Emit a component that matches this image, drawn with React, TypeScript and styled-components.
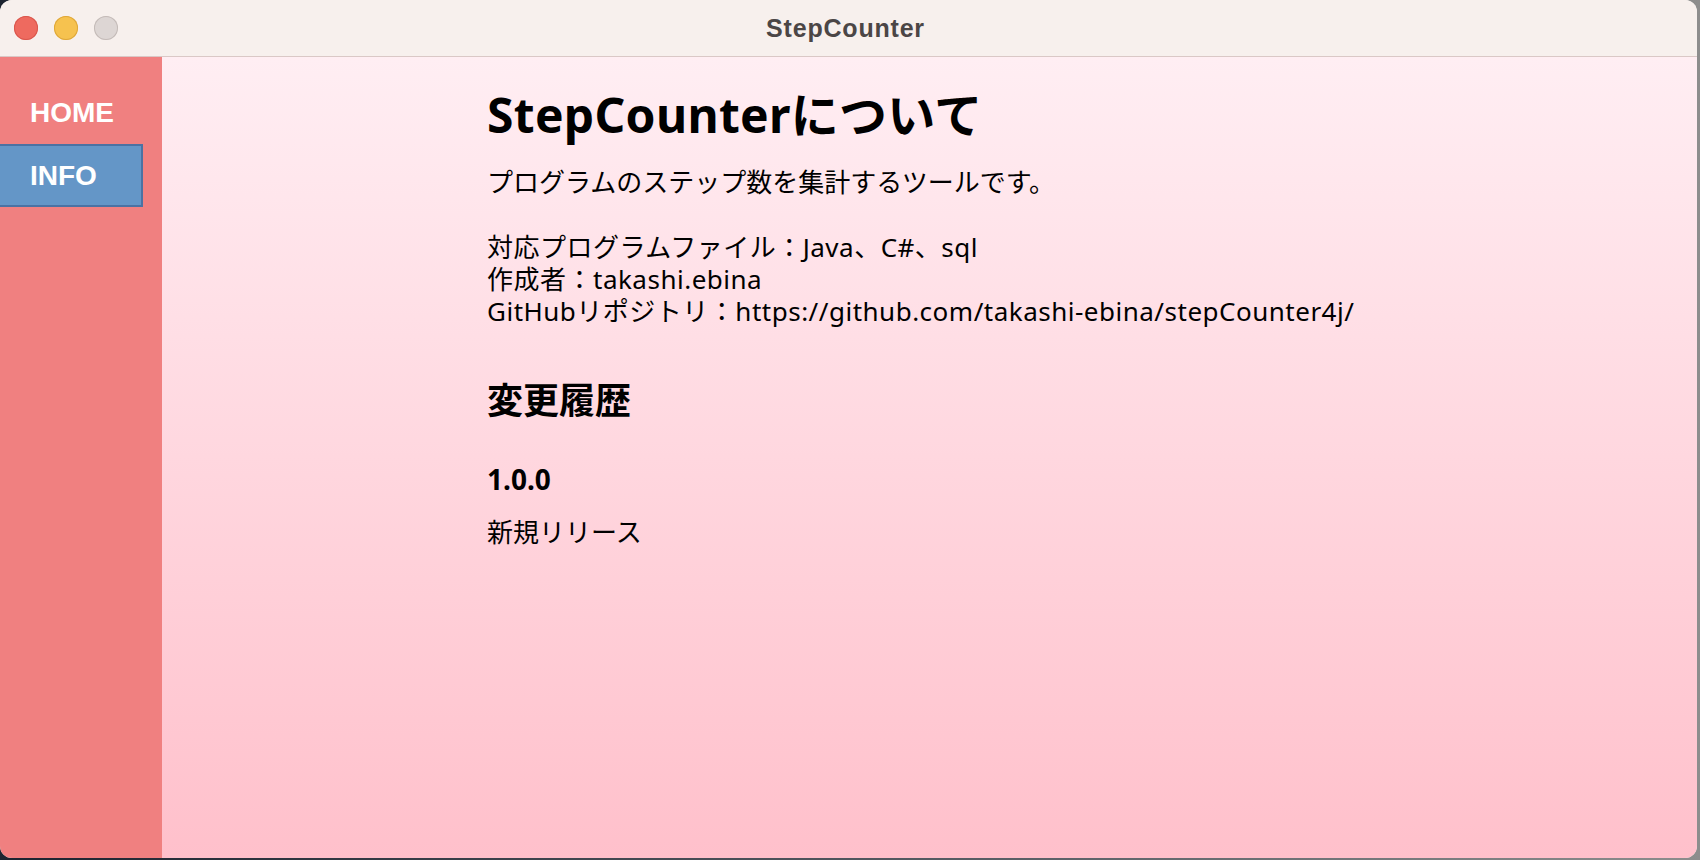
import React from "react";
import styled, { createGlobalStyle } from "styled-components";

const Global = createGlobalStyle`
  html, body { margin: 0; padding: 0; }
  body {
    width: 1700px;
    height: 860px;
    background: linear-gradient(90deg, #1d2430 0%, #5a5f66 60%, #8d8d8d 100%);
    overflow: hidden;
  }
`;

const Window = styled.div`
  width: 1697px;
  height: 858px;
  border-radius: 12px;
  overflow: hidden;
  display: flex;
  flex-direction: column;
  background: #f7f0ed;
`;

const TitleBar = styled.div`
  height: 56px;
  flex: none;
  display: grid;
  grid-template-columns: 1fr auto 1fr;
  align-items: center;
  background: #f7f0ed;
  border-bottom: 1px solid rgba(120, 60, 60, 0.22);
`;

const Lights = styled.div`
  display: flex;
  gap: 16px;
  padding-left: 14px;
`;

const Light = styled.span<{ $c: string; $b: string }>`
  width: 24px;
  height: 24px;
  border-radius: 50%;
  background: ${(p) => p.$c};
  box-shadow: inset 0 0 0 1px ${(p) => p.$b};
`;

const Title = styled.div`
  font-family: "Liberation Sans", Arial, sans-serif;
  font-weight: 700;
  font-size: 25px;
  letter-spacing: 0.8px;
  color: #4b4646;
  margin-right: 6px;
`;

const Main = styled.div`
  flex: 1;
  display: flex;
  min-height: 0;
`;

const Sidebar = styled.nav`
  width: 162px;
  flex: none;
  background: #f08080;
  padding-top: 24px;
  display: flex;
  flex-direction: column;
`;

const NavButton = styled.div<{ $active?: boolean }>`
  width: 143px;
  height: 63px;
  box-sizing: border-box;
  display: flex;
  align-items: center;
  padding-left: 30px;
  font-family: "Liberation Sans", Arial, sans-serif;
  font-weight: 700;
  font-size: 28px;
  color: #ffffff;
  background: ${(p) => (p.$active ? "#6496c7" : "transparent")};
  border: 2px solid ${(p) => (p.$active ? "#4b72a3" : "transparent")};
  border-left: none;
`;

const Content = styled.main`
  flex: 1;
  background: linear-gradient(180deg, #ffeef3 0%, #ffc0cb 100%);
  padding: 31px 0 0 325px;
  font-family: "Noto Sans", "Noto Sans CJK JP", sans-serif;
  color: #000;
`;

const H1 = styled.h1`
  margin: 0;
  font-size: 48px;
  line-height: 53px;
  font-weight: 700;
  letter-spacing: 0.3px;
`;

const P = styled.p<{ $mt: number; $ls?: number }>`
  margin: ${(p) => p.$mt}px 0 0;
  font-size: 26px;
  line-height: 32px;
  font-weight: 400;
  letter-spacing: ${(p) => p.$ls ?? 0}px;
`;

const H2 = styled.h2`
  margin: 51px 0 0;
  font-size: 36px;
  line-height: 46px;
  font-weight: 700;
`;

const H3 = styled.h3`
  margin: 37px 0 0;
  font-size: 28px;
  line-height: 36px;
  font-weight: 700;
`;

export default function App() {
  return (
    <>
      <Global />
      <Window>
        <TitleBar>
          <Lights>
            <Light $c="#ee6a5f" $b="#d9574d" />
            <Light $c="#f6c24f" $b="#dea73a" />
            <Light $c="#ddd6d4" $b="#c4bbb8" />
          </Lights>
          <Title>StepCounter</Title>
          <div />
        </TitleBar>
        <Main>
          <Sidebar>
            <NavButton>HOME</NavButton>
            <NavButton $active>INFO</NavButton>
          </Sidebar>
          <Content>
            <H1>StepCounterについて</H1>
            <P $mt={25}>プログラムのステップ数を集計するツールです。</P>
            <P $mt={33} $ls={0.5}>
              対応プログラムファイル：Java、C#、sql
              <br />
              作成者：takashi.ebina
              <br />
              GitHubリポジトリ：https://github.com/takashi-ebina/stepCounter4j/
            </P>
            <H2>変更履歴</H2>
            <H3>1.0.0</H3>
            <P $mt={19}>新規リリース</P>
          </Content>
        </Main>
      </Window>
    </>
  );
}
